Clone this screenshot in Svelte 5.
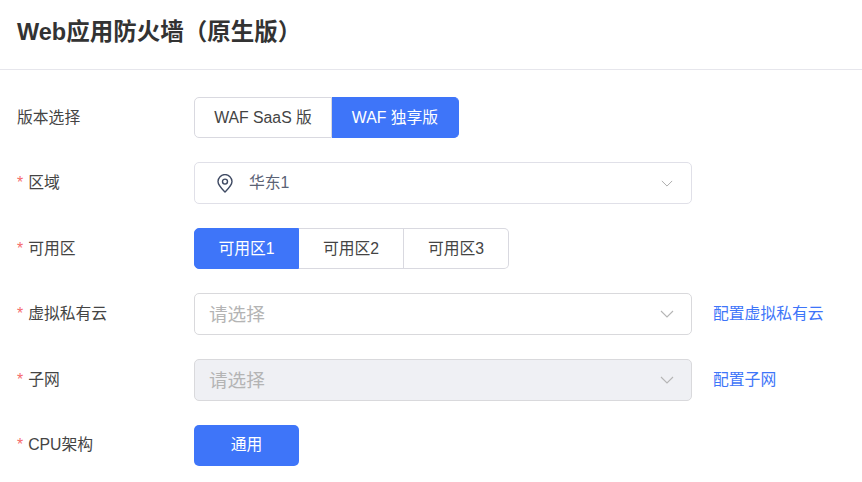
<script lang="ts">
  const versions = ['WAF SaaS 版', 'WAF 独享版'];
  const zones = ['可用区1', '可用区2', '可用区3'];
</script>

{#snippet chevron(cls)}
  <svg class={cls} viewBox="0 0 14 8" fill="none" aria-hidden="true">
    <path d="M1 1l6 6 6-6" stroke="currentColor" stroke-width="1.1" />
  </svg>
{/snippet}

<div class="page">
  <header class="head">
    <h1>Web应用防火墙（原生版）</h1>
  </header>

  <form class="form">
    <div class="row">
      <span class="label">版本选择</span>
      <div class="tabs">
        <button type="button" class="tab wide">{versions[0]}</button>
        <button type="button" class="tab wide2 on">{versions[1]}</button>
      </div>
    </div>

    <div class="row">
      <span class="label"><i>*</i>区域</span>
      <div class="select region">
        <svg class="pin" viewBox="0 0 16 19" fill="none" aria-hidden="true">
          <path d="M8 18C5 15 1 11.400 1 7.600a7 7 0 0 1 14 0C15 11.400 11 15 8 18z" stroke="#3f4a63" stroke-width="1.4" stroke-linejoin="round" />
          <circle cx="8" cy="7.600" r="2.500" stroke="#3f4a63" stroke-width="1.4" />
        </svg>
        <span class="value">华东1</span>
        {@render chevron('arrow small')}
      </div>
    </div>

    <div class="row">
      <span class="label"><i>*</i>可用区</span>
      <div class="tabs zone">
        {#each zones as z, i}
          <button type="button" class="tab z" class:on={i === 0}>{z}</button>
        {/each}
      </div>
    </div>

    <div class="row">
      <span class="label"><i>*</i>虚拟私有云</span>
      <div class="select">
        <span class="holder">请选择</span>
        {@render chevron('arrow')}
      </div>
      <a class="link" href="#vpc">配置虚拟私有云</a>
    </div>

    <div class="row">
      <span class="label"><i>*</i>子网</span>
      <div class="select off">
        <span class="holder">请选择</span>
        {@render chevron('arrow')}
      </div>
      <a class="link" href="#subnet">配置子网</a>
    </div>

    <div class="row">
      <span class="label"><i>*</i>CPU架构</span>
      <button type="button" class="solid">通用</button>
    </div>
  </form>
</div>

<style>
  :global(body) {
    background: #fff;
    overflow: hidden;
  }

  .page {
    width: 862px;
    height: 482px;
    overflow: hidden;
    font-family: "Liberation Sans", "Noto Sans CJK SC", sans-serif;
    font-size: 15.8px;
    color: #444;
  }

  .head {
    height: 69px;
    padding-left: 17px;
    display: flex;
    align-items: center;
    border-bottom: 1px solid #e6e6ec;
    box-sizing: content-box;
  }

  h1 {
    margin: 0 0 9px;
    font-size: 23.5px;
    font-weight: 700;
    color: #333;
  }

  .form {
    padding: 27px 0 0 17px;
    display: flex;
    flex-direction: column;
    gap: 24.6px;
  }

  .row {
    display: flex;
    align-items: center;
    height: 41px;
  }

  .label {
    width: 177px;
    flex: none;
    padding-bottom: 3px;
  }

  .label i {
    color: #f56c6c;
    font-style: normal;
    margin-right: 5px;
  }

  .tabs {
    display: flex;
    height: 41px;
    box-sizing: border-box;
  }

  .tab {
    font: inherit;
    height: 41px;
    padding: 0 0 3px;
    background: #fff;
    color: #444;
    border: 1px solid #d9d9e0;
    border-left: none;
  }

  .tab:first-child {
    border-left: 1px solid #d9d9e0;
    border-radius: 5px 0 0 5px;
  }

  .tab:last-child {
    border-radius: 0 5px 5px 0;
  }

  .tab.on {
    background: #3e75f9;
    border-color: #3e75f9;
    color: #fff;
  }

  .wide {
    width: 138px;
  }

  .wide2 {
    width: 127px;
  }

  .z {
    width: 105px;
  }

  .select {
    width: 498px;
    height: 42px;
    box-sizing: border-box;
    border: 1px solid #d9d9dc;
    border-radius: 5px;
    background: #fff;
    display: flex;
    align-items: center;
    padding: 0 17px 0 14px;
    flex: none;
  }

  .select.off {
    background: #eff0f4;
  }

  .region {
    padding-left: 22px;
    border-color: #e0e0e8;
  }

  .pin {
    width: 16px;
    height: 19px;
    margin-right: 16px;
    flex: none;
  }

  .value {
    color: #5a6275;
    padding-bottom: 3px;
  }

  .holder {
    font-size: 18.6px;
    color: #b4b4b4;
    padding-bottom: 3px;
  }

  .arrow {
    width: 14px;
    height: 8px;
    margin-left: auto;
    color: #b5b5b5;
  }

  .arrow.small {
    width: 12px;
    height: 7px;
    margin-right: 1px;
    color: #a8a8a8;
  }

  .link {
    margin-left: 21px;
    color: #3e75f9;
    text-decoration: none;
    padding-bottom: 3px;
  }

  .solid {
    font: inherit;
    width: 105px;
    height: 41px;
    padding: 0 0 3px;
    border: none;
    border-radius: 5px;
    background: #3e75f9;
    color: #fff;
  }
</style>
